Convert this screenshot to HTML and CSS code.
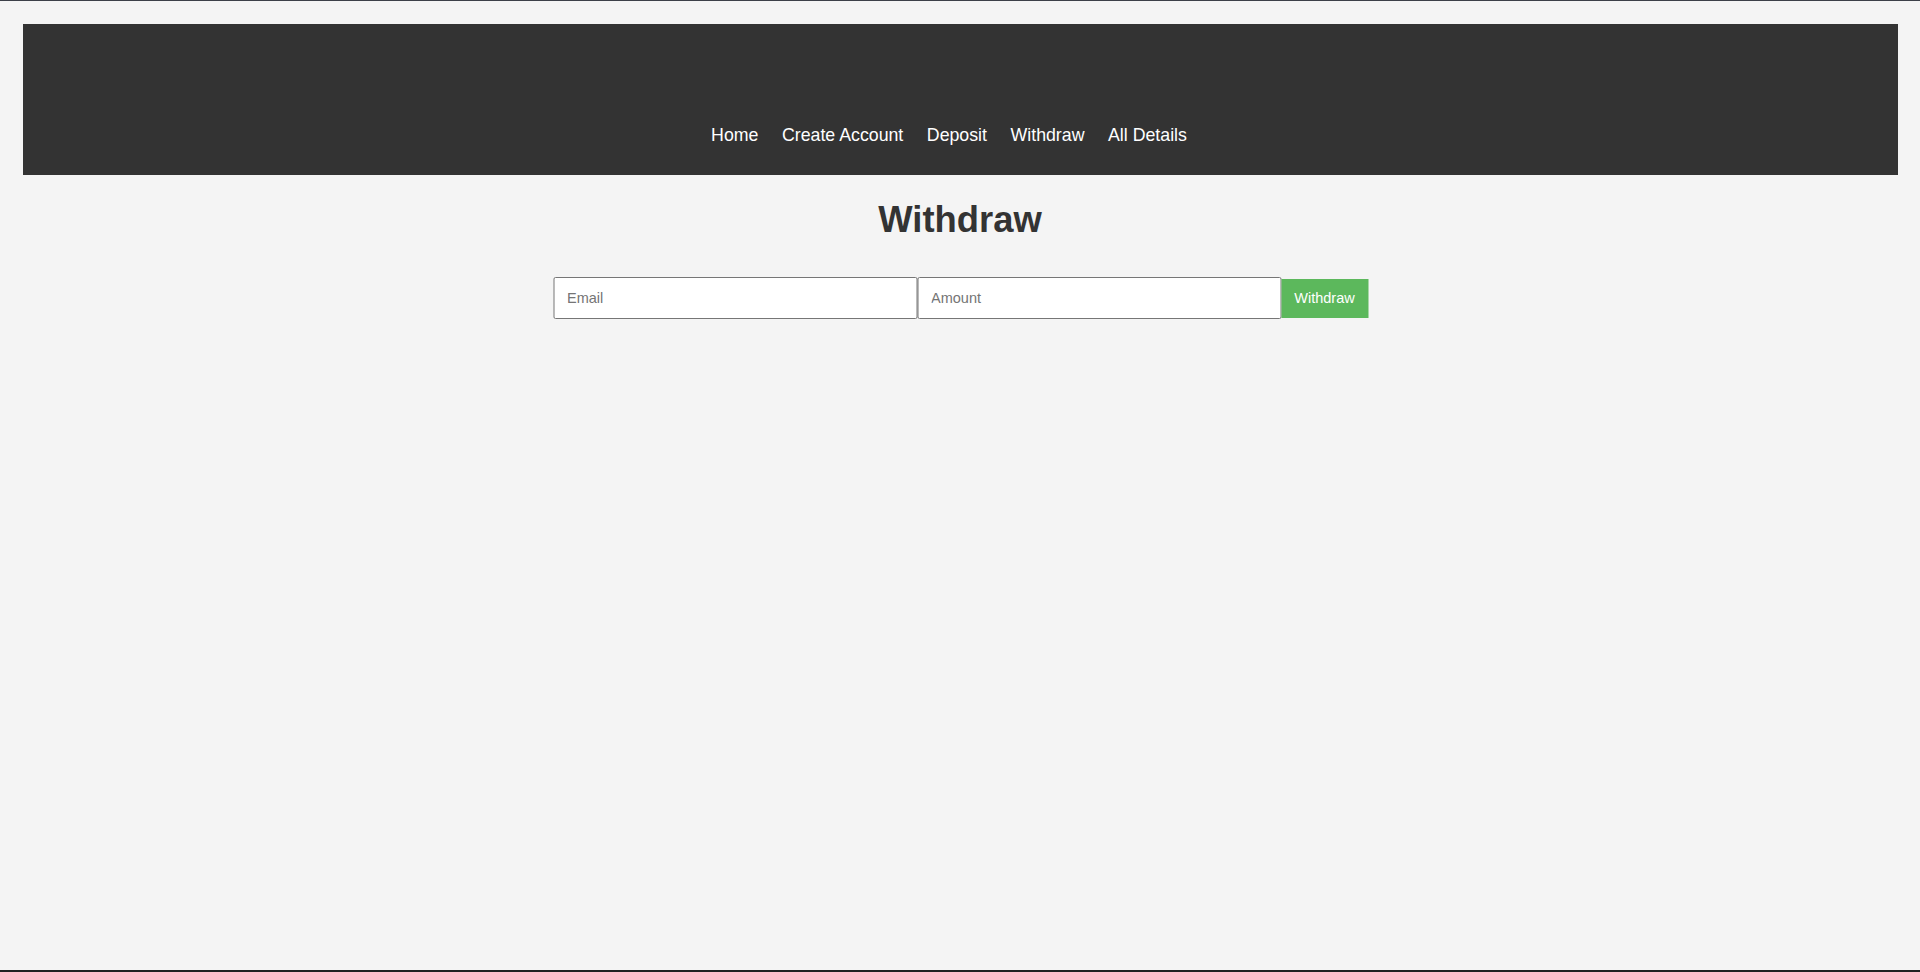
FILE: index.html
```html
<!DOCTYPE html>
<html lang="en">
<head>
<meta charset="utf-8">
<title>Withdraw</title>
<link rel="stylesheet" href="styles.css">
</head>
<body>
<div class="page">
  <header class="site-header">
    <nav class="nav">
      <a class="nav-link" href="#">Home</a>
      <a class="nav-link" href="#">Create Account</a>
      <a class="nav-link" href="#">Deposit</a>
      <a class="nav-link" href="#">Withdraw</a>
      <a class="nav-link" href="#">All Details</a>
    </nav>
  </header>
  <main class="content">
    <h1 class="title">Withdraw</h1>
    <form class="form">
      <input class="field" type="email" placeholder="Email">
      <input class="field" type="number" placeholder="Amount">
      <button class="btn" type="button">Withdraw</button>
    </form>
  </main>
</div>
</body>
</html>
```
FILE: styles.css
```css
html, body {
  margin: 0;
  padding: 0;
}
body {
  background: #f4f4f4;
  font-family: "Liberation Sans", Arial, sans-serif;
  color: #333;
}
.page {
  box-sizing: border-box;
  height: 972px;
  border-top: 1px solid #3c4048;
  border-bottom: 2px solid #222;
  padding-top: 23px;
  overflow: hidden;
}
.site-header {
  background: #333;
  margin: 0 22px 0 23px;
  height: 151px;
  box-sizing: border-box;
  padding: 102px 23px 30px 0;
}
.nav {
  display: flex;
  justify-content: center;
  gap: 23.5px;
  line-height: 19px;
}
.nav-link {
  color: #fff;
  text-decoration: none;
  font-size: 17.75px;
}
.content {
  display: flex;
  flex-direction: column;
  align-items: center;
}
.title {
  margin: 24px 0 0;
  font-size: 36.4px;
  line-height: 41px;
  font-weight: bold;
  color: #333;
}
.form {
  display: flex;
  align-items: center;
  margin-top: 37px;
  height: 42px;
  transform: translateX(0.5px);
}
.field {
  box-sizing: border-box;
  width: 364px;
  height: 42px;
  margin: 0;
  padding: 0 13px;
  border: 1px solid #767676;
  border-radius: 2px;
  background: #fff;
  font-family: "Liberation Sans", Arial, sans-serif;
  font-size: 14.5px;
  color: #333;
  outline: none;
}
.field::placeholder {
  color: #757575;
}
.field::-webkit-outer-spin-button,
.field::-webkit-inner-spin-button {
  -webkit-appearance: none;
  margin: 0;
}
.btn {
  box-sizing: border-box;
  width: 87px;
  height: 39px;
  margin: 0;
  padding: 0;
  border: none;
  background: #5cb85c;
  color: #fff;
  font-family: "Liberation Sans", Arial, sans-serif;
  font-size: 14.5px;
  cursor: pointer;
}
```
